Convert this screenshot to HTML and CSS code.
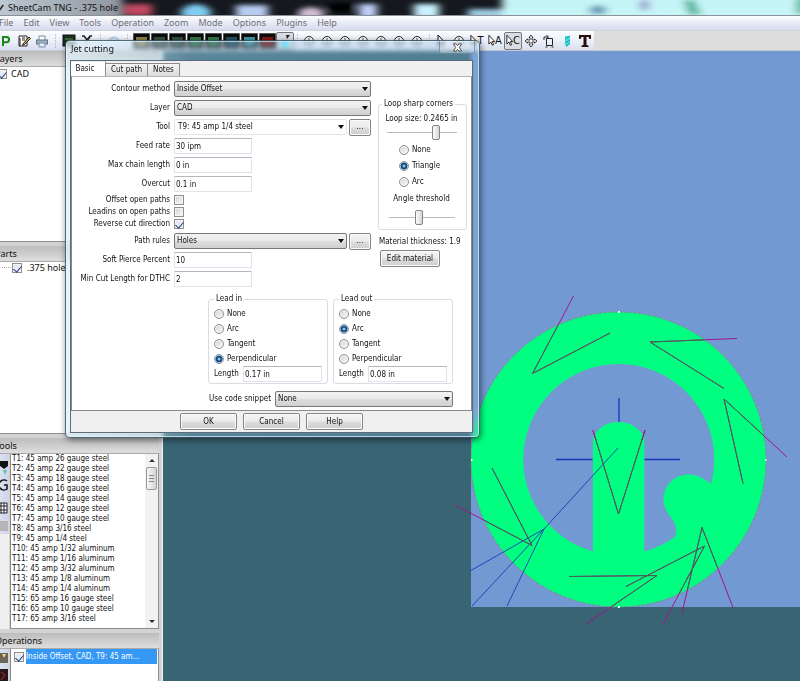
FILE: index.html
```
<!DOCTYPE html>
<html lang="en">
<head>
<meta charset="utf-8">
<title>SheetCam TNG - .375 hole</title>
<link rel="stylesheet" href="styles.css">
</head>
<body>
<svg class="defs" aria-hidden="true">
  <symbol id="post" viewBox="0 0 17 16"><rect width="17" height="16" rx="1" fill="#555"/><rect x="1" y="1" width="15" height="14" fill="#0b0d0c"/><path d="M3 4h11v9H3z" fill="currentColor" opacity=".75"/></symbol>
  <symbol id="eye" viewBox="0 0 14 14"><circle cx="7" cy="7" r="4.500" fill="#fff" stroke="#222"/><path d="M4 6.500h6M7 4v5" stroke="#555"/></symbol>
  <symbol id="cursor" viewBox="0 0 8 14"><path d="M1 1v10l2.300-2.200 1.700 3.700 1.500-.8-1.700-3.500h2.900z" fill="#fff" stroke="#111"/></symbol>
</svg>
<div class="app">
  <header class="title">
    <svg class="backdrop" viewBox="0 0 800 15" preserveAspectRatio="none" aria-hidden="true">
      <defs>
        <filter id="soft" x="-10%" y="-50%" width="120%" height="200%"><feGaussianBlur stdDeviation="4 2"/></filter>
        <linearGradient id="left"><stop offset="0" stop-color="#c2cfda"/><stop offset="1" stop-color="#8f979e"/></linearGradient>
      </defs>
      <rect width="800" height="15" fill="#15191f"/>
      <g filter="url(#soft)">
        <rect x="-20" y="-5" width="142" height="25" fill="url(#left)"/>
        <rect x="124" y="4" width="28" height="12" fill="#c04a60"/>
        <ellipse cx="196" cy="13" rx="15" ry="9" fill="#7fcdf2"/>
        <rect x="236" y="5" width="32" height="14" fill="#b7ccf2"/>
        <ellipse cx="311" cy="14" rx="13" ry="7" fill="#cfbdd4"/>
        <rect x="328" y="3" width="26" height="9" fill="#040506"/>
        <rect x="359" y="4" width="18" height="14" fill="#c2d1fa"/>
        <rect x="414" y="4" width="25" height="14" fill="#c9f2ff"/>
        <rect x="468" y="9" width="34" height="10" fill="#9dcbe2"/>
        <rect x="502" y="-6" width="320" height="30" fill="#c6f5f7"/>
        <ellipse cx="598" cy="10" rx="9" ry="5" fill="#6d9fba"/>
        <rect x="640" y="0" width="9" height="10" fill="#9a9dcf"/>
        <path d="M683 0h12l6 15h-12z" fill="#54b59c"/>
        <rect x="796" y="-2" width="10" height="16" fill="#54b59c"/>
      </g>
    </svg>
    <svg class="mark" viewBox="0 0 8 10" aria-hidden="true"><path d="M0 4l2 4 5-7" fill="none" stroke="#222" stroke-width="2"/></svg>
    <h1>SheetCam TNG - .375 hole</h1>
  </header>
  <nav class="menu">
    <a href="#">File</a><a href="#">Edit</a><a href="#">View</a><a href="#">Tools</a><a href="#">Operation</a><a href="#">Zoom</a><a href="#">Mode</a><a href="#">Options</a><a href="#">Plugins</a><a href="#">Help</a>
  </nav>
  <div class="toolbar">
    <div class="tools">
      <button aria-label="Post"><svg viewBox="0 0 14 14"><path d="M4 12V3h3.500a2.600 2.600 0 010 5.200H4" fill="none" stroke="#168a16" stroke-width="2"/></svg></button>
      <button aria-label="Edit job"><svg viewBox="0 0 14 14"><path d="M2 2h8v10H2z" fill="#fff" stroke="#222"/><path d="M3 12V4M5 4h3M5 6h3" stroke="#222"/><path d="M6 10l6-7 1.500 1.500-6 6-2 .7z" fill="#d6b24a" stroke="#222"/></svg></button>
      <button aria-label="Print"><svg viewBox="0 0 14 14"><path d="M4 6V2h6v4" fill="#fff" stroke="#7a8da0"/><rect x="1.500" y="6" width="11" height="4" fill="#9fb0c0" stroke="#5f7488"/><path d="M4 9h6v4H4z" fill="#dcecf8" stroke="#7a8da0"/></svg></button>
      <i class="sep"></i>
      <button aria-label="Machine"><svg viewBox="0 0 14 14"><rect x="1" y="1" width="12" height="11" fill="#18301c" stroke="#111"/><path d="M3 5h8" stroke="#5c9a62"/></svg></button>
      <button aria-label="Cut"><svg viewBox="0 0 14 14"><path d="M2 2h2l3 4 3-4h2M5 9l5-6" fill="none" stroke="#222" stroke-width="1.500"/></svg></button>
      <i class="sep"></i>
      <button aria-label="Undo"><svg viewBox="0 0 14 14"><path d="M2 6c4-4 8-2 10 1" fill="none" stroke="#bcd3e6" stroke-width="3"/></svg></button>
      <i class="sep"></i>
      <button class="op c1" aria-label="Outside offset"><svg><use href="#post"/></svg></button>
      <button class="op c2" aria-label="Inside offset"><svg><use href="#post"/></svg></button>
      <button class="op c2" aria-label="No offset"><svg><use href="#post"/></svg></button>
      <button class="op c3" aria-label="Pocket"><svg><use href="#post"/></svg></button>
      <button class="op c3" aria-label="Drill"><svg><use href="#post"/></svg></button>
      <button class="op c4" aria-label="Engrave"><svg><use href="#post"/></svg></button>
      <button class="op c5" aria-label="Thread"><svg><use href="#post"/></svg></button>
      <button class="op c6" aria-label="Spot"><svg><use href="#post"/></svg></button>
      <button class="on" aria-label="Jet cut"><svg viewBox="0 0 14 14"><path d="M8 1h4l-3 4z" fill="#222"/><circle cx="7" cy="10" r="4" fill="#59e2ff"/></svg></button>
      <i class="sep thin"></i>
      <button aria-label="View 1"><svg><use href="#eye"/></svg></button>
      <button aria-label="View 2"><svg><use href="#eye"/></svg></button>
      <button aria-label="View 3"><svg><use href="#eye"/></svg></button>
      <button aria-label="View 4"><svg><use href="#eye"/></svg></button>
      <button aria-label="View 5"><svg><use href="#eye"/></svg></button>
      <button aria-label="View 6"><svg><use href="#eye"/></svg></button>
      <button aria-label="View 7"><svg><use href="#eye"/></svg></button>
      <i class="sep thin"></i>
      <button aria-label="Select"><svg><use href="#cursor"/></svg></button>
      <button aria-label="Zoom"><svg><use href="#eye"/></svg></button>
      <button class="letter"><svg><use href="#cursor"/></svg>T</button>
      <button class="letter"><svg><use href="#cursor"/></svg>A</button>
      <button class="letter on"><svg><use href="#cursor"/></svg>C</button>
      <button aria-label="Move"><svg viewBox="0 0 14 14"><path d="M7 1l2 2.500H8V6h2.500V5L13 7l-2.500 2V8H8v2.500h1L7 13l-2-2.500h1V8H3.500v1L1 7l2.500-2v1H6V3.500H5z" fill="#fff" stroke="#222" stroke-width=".9"/></svg></button>
      <button aria-label="Rotate"><svg viewBox="0 0 14 14"><path d="M4.500 4.500h6v7h-6zM3.500 13h2M9.500 13h2M2 6V3h4M4.500 1L6.500 3l-2 2" fill="none" stroke="#222"/></svg></button>
      <button aria-label="Drilling"><svg viewBox="0 0 14 14"><path d="M5 2h5v8l-3 3-2-2z" fill="#3fe0e4"/><path d="M5 5l5-3M5 9l5-3M6 12l4-3" stroke="#1a97a2"/></svg></button>
      <button aria-label="Text"><svg viewBox="0 0 14 14"><path d="M1 1h12v4h-1.500l-1-2H8.500v8l2 .5V13h-7v-1.500l2-.5V3h-2l-1 2H1z" fill="#2b0d0d"/></svg></button>
    </div>
  </div>
  <main class="work">
    <aside class="side">
      <section>
        <h2>Layers</h2>
        <div class="pane layers"><label><input type="checkbox" checked>CAD</label></div>
      </section>
      <section>
        <h2>Parts</h2>
        <div class="pane parts"><i class="twig"></i><label><input type="checkbox" checked>.375 hole</label></div>
      </section>
      <section>
        <h2>Tools</h2>
        <div class="split">
          <div class="strip">
            <svg viewBox="0 0 15 80" aria-hidden="true"><path d="M6 7h8v5l-4 3-4-3z" fill="#111"/><path d="M9 16h4l-2 5z" fill="#5fc79b"/><path d="M13 27a5 5 0 10 0 8v-4h-3" fill="none" stroke="#111" stroke-width="1.500"/><path d="M4 49h9v10H4zM4 52h9M4 56h9M7 49v10M10 49v10" fill="#fff" stroke="#222"/><rect x="4" y="67" width="10" height="10" fill="#b5b5b5"/></svg>
          </div>
          <div class="pane listbox">
            <ul>
              <li>T1: 45 amp 26 gauge steel</li><li>T2: 45 amp 22 gauge steel</li><li>T3: 45 amp 18 gauge steel</li><li>T4: 45 amp 16 gauge steel</li><li>T5: 45 amp 14 gauge steel</li><li>T6: 45 amp 12 gauge steel</li><li>T7: 45 amp 10 gauge steel</li><li>T8: 45 amp 3/16 steel</li><li>T9: 45 amp 1/4 steel</li><li>T10: 45 amp 1/32 aluminum</li><li>T11: 45 amp 1/16 aluminum</li><li>T12: 45 amp 3/32 aluminum</li><li>T13: 45 amp 1/8 aluminum</li><li>T14: 45 amp 1/4 aluminum</li><li>T15: 65 amp 16 gauge steel</li><li>T16: 65 amp 10 gauge steel</li><li>T17: 65 amp 3/16 steel</li>
            </ul>
            <div class="scroll"><i class="up"></i><i class="thumb"></i><i class="down"></i></div>
          </div>
        </div>
      </section>
      <section>
        <h2>Operations</h2>
        <div class="split">
          <div class="strip">
            <svg viewBox="0 0 15 34" aria-hidden="true"><rect x="3" y="4" width="11" height="10" fill="#6d6457"/><path d="M8 5h4l-2 4z" fill="#f1d27a"/><rect x="3" y="20" width="11" height="13" fill="#2a1417"/><path d="M7 23l4 3-4 5" stroke="#a33" fill="none"/></svg>
          </div>
          <div class="pane ops"><label><input type="checkbox" checked><span>Inside Offset, CAD, T9: 45 am...</span></label></div>
        </div>
      </section>
    </aside>
    <svg class="canvas" viewBox="163 51 637 630" preserveAspectRatio="xMinYMin slice" role="img" aria-label="Part drawing">
      <defs>
        <clipPath id="disc"><circle cx="618.500" cy="459.500" r="147"/></clipPath>
        <g id="leads" fill="none">
          <path d="M573.500 296L532.500 373.500 610 333M737 338.500L650 342l74 46.500M787 457L724 399l19 84.500M593 430.500L618.500 514 645 430M455 505l77 40.500-40-77.500M569 576.500l88-1L586 624M626 586.500L704.500 546 663 624M682 613l20-85.500L733 607.500"/>
        </g>
      </defs>
      <rect x="471" y="51" width="1600" height="556" fill="#7399d3"/>
      <path fill="#00ff80" fill-rule="evenodd" d="M618.500 312a147.500 147.500 0 110 295 147.500 147.500 0 010-295zM618.800 364a95.500 95.500 0 100 191 95.500 95.500 0 000-191z"/>
      <path fill="#00ff80" d="M593 565V437Q602 422 618.500 422T644.300 437V565zM712 484C701 477 695 474 687 474.500 672 476 664 487 663.500 499 663.500 508 668 513 672 519 676.500 525 677 531 675 537L705 560 735 490z"/>
      <circle cx="618.500" cy="459.500" r="147.500" fill="none" stroke="#7f8a70" stroke-width=".8" stroke-dasharray="3 2"/>
      <path d="M556 459.500h36.500M644.500 459.500H680M619 398v24" stroke="#1735b8" stroke-width="1.300"/>
      <path d="M618 448L544 529 472 606M544 529l-74 42M544 529l-37 77" fill="none" stroke="#1d48b4"/>
      <use href="#leads" stroke="#a3158e"/>
      <use href="#leads" stroke="#3c6b50" clip-path="url(#disc)"/>
      <path d="M593 430.500l3 10M645 430l-3 10" stroke="#a3158e"/>
      <path d="M618 312h2M618 607h2M471 460h1.500M765 460h1.500" stroke="#d8ffe8" stroke-width="2"/>
    </svg>
  </main>

  <form class="dialog">
    <div class="caption">
      <h2>Jet cutting</h2>
      <button type="button" class="close" aria-label="Close"><svg viewBox="0 0 12 10"><path d="M1.500 1h3L6 3l1.500-2h3L8 5l2.500 4h-3L6 7 4.500 9h-3L4 5z" fill="#fff" stroke="#444"/></svg></button>
    </div>
    <div class="client">
      <div class="tabs" role="tablist">
        <button type="button" role="tab" class="active">Basic</button><button type="button" role="tab">Cut path</button><button type="button" role="tab">Notes</button>
      </div>
      <div class="page">
        <div class="columns">
          <div class="fields">
            <div class="row"><label for="contour">Contour method</label><span class="select"><select id="contour"><option>Inside Offset</option></select></span></div>
            <div class="row"><label for="layer">Layer</label><span class="select"><select id="layer"><option>CAD</option></select></span></div>
            <div class="row"><label for="tool">Tool</label><span class="select flat"><select id="tool"><option>T9: 45 amp 1/4 steel</option></select></span><button type="button" class="btn more">...</button></div>
            <div class="row"><label for="feed">Feed rate</label><input id="feed" type="text" value="30 ipm"></div>
            <div class="row"><label for="chain">Max chain length</label><input id="chain" type="text" value="0 in"></div>
            <div class="row"><label for="over">Overcut</label><input id="over" type="text" value="0.1 in"></div>
            <div class="checks">
              <div class="row"><label for="oop">Offset open paths</label><input id="oop" type="checkbox"></div>
              <div class="row"><label for="lop">Leadins on open paths</label><input id="lop" type="checkbox"></div>
              <div class="row"><label for="rcd">Reverse cut direction</label><input id="rcd" type="checkbox" checked></div>
            </div>
            <div class="row"><label for="rules">Path rules</label><span class="select"><select id="rules"><option>Holes</option></select></span><button type="button" class="btn more">...</button></div>
            <div class="row"><label for="pierce">Soft Pierce Percent</label><input id="pierce" type="text" value="10"></div>
            <div class="row"><label for="dthc">Min Cut Length for DTHC</label><input id="dthc" type="text" value="2"></div>
          </div>
          <div class="extra">
            <fieldset class="loop">
              <legend>Loop sharp corners</legend>
              <label for="size">Loop size: 0.2465 in</label>
              <input id="size" type="range" min="0" max="100" value="73">
              <div class="radios">
                <label><input type="radio" name="loop">None</label>
                <label><input type="radio" name="loop" checked>Triangle</label>
                <label><input type="radio" name="loop">Arc</label>
              </div>
              <label for="angle">Angle threshold</label>
              <input id="angle" type="range" min="0" max="100" value="45">
            </fieldset>
            <p>Material thickness: 1.9</p>
            <button type="button" class="btn">Edit material</button>
          </div>
        </div>
        <div class="leads">
          <fieldset>
            <legend>Lead in</legend>
            <label><input type="radio" name="in">None</label>
            <label><input type="radio" name="in">Arc</label>
            <label><input type="radio" name="in">Tangent</label>
            <label><input type="radio" name="in" checked>Perpendicular</label>
            <div class="length"><label for="inlen">Length</label><input id="inlen" type="text" value="0.17 in"></div>
          </fieldset>
          <fieldset>
            <legend>Lead out</legend>
            <label><input type="radio" name="out">None</label>
            <label><input type="radio" name="out" checked>Arc</label>
            <label><input type="radio" name="out">Tangent</label>
            <label><input type="radio" name="out">Perpendicular</label>
            <div class="length"><label for="outlen">Length</label><input id="outlen" type="text" value="0.08 in"></div>
          </fieldset>
        </div>
        <div class="snippet"><label for="code">Use code snippet</label><span class="select"><select id="code"><option>None</option></select></span></div>
      </div>
      <div class="actions">
        <button type="button" class="btn">OK</button><button type="button" class="btn">Cancel</button><button type="button" class="btn">Help</button>
      </div>
    </div>
  </form>
</div>
</body>
</html>
```
FILE: styles.css
```
* { box-sizing: border-box; }
body { margin: 0; overflow: hidden; font: 8px/10px "DejaVu Sans Condensed", "Noto Sans", sans-serif; color: #111; }
h1, h2, p, ul { margin: 0; padding: 0; font-weight: normal; }
ul { list-style: none; }
button, input, select { font: inherit; color: inherit; margin: 0; }
button { padding: 0; border: 0; background: none; }
svg { display: block; }
.defs { position: absolute; width: 0; height: 0; }

/* The window hangs slightly off the left edge of the screen. */
.app { position: relative; display: flex; flex-direction: column; height: 100vh; margin-left: -6px; }

.title { position: relative; display: flex; flex: none; align-items: center; gap: 4px; height: 15px; padding-left: 4px; }
.title h1 { position: relative; font: 9px/14px "Noto Sans", sans-serif; }
.backdrop { position: absolute; left: 6px; top: 0; width: calc(100% - 6px); height: 100%; }
.mark { position: relative; width: 6px; height: 8px; }

.menu { display: flex; flex: none; gap: 10px; height: 15px; padding-left: 5px; border-top: 1px solid #8b9196; background: linear-gradient(#fdfdff, #e8ebf6 50%, #d6dbec); font: 9px/14px "Noto Sans", sans-serif; }
.menu a { color: #6f7075; text-decoration: none; }

.toolbar { display: flex; flex: none; height: 21px; background: #dcdcdc; border-top: 1px solid #d0d2dc; border-bottom: 1px solid #c4c8d0; }
.tools { display: flex; align-items: center; padding-left: 3px; background: linear-gradient(#fbfcff, #eef1fa 45%, #d9dff0); }
.tools button { display: flex; align-items: center; justify-content: center; width: 18px; height: 18px; }
.tools svg { width: 14px; height: 14px; }
.tools .op svg { width: 17px; height: 16px; }
.tools .on { border: 1px solid #777; border-radius: 2px; background: #dadde4; }
.tools .letter { font-size: 11px; }
.tools .letter svg { width: 7px; height: 13px; }
.sep { width: 9px; height: 14px; background: radial-gradient(circle, #999 1px, transparent 1px) center / 3px 3px repeat-y; }
.thin { width: 6px; }
.c1 { color: #b9a35a; } .c2 { color: #41634a; } .c3 { color: #3f9a5a; } .c4 { color: #2a6578; } .c5 { color: #55c0d0; } .c6 { color: #b01818; }

.work { display: flex; flex: 1; min-height: 0; }
.side { display: grid; flex: none; grid-template-rows: minmax(0, 195fr) minmax(0, 192fr) minmax(0, 195fr) minmax(0, 48fr); width: 169px; padding-right: 3px; background: #d3d3d3; border-right: 1px solid #eef3f6; }
.side section { display: flex; flex-direction: column; min-height: 0; padding-bottom: 4px; }
.side section:last-child { padding-bottom: 0; }
.side h2 { flex: none; height: 16px; padding-left: 1px; font: 9px/15px "Noto Sans", sans-serif; background: linear-gradient(#bcbcbc, #dedede); border-bottom: 1px solid #aaa; }
.pane { flex: 1; min-width: 0; background: #fff; border: solid #8e8e8e; border-width: 0 1px 1px 0; }
.pane label { display: flex; align-items: center; gap: 4px; }
.layers { padding: 1px 0 0 3px; font: 9px/12px "Noto Sans", sans-serif; }
.parts { display: flex; align-items: flex-start; padding: 0 0 0 8px; font: 9px/12px "Noto Sans", sans-serif; }
.parts label { gap: 5px; margin-left: 1px; }
.twig { width: 9px; height: 6px; border-bottom: 1px dotted #aaa; }
.split { display: flex; flex: 1; min-height: 0; }
.strip { flex: none; width: 15px; background: #efefef; overflow: hidden; }
.strip svg { width: 15px; background: linear-gradient(90deg, #e3e8f4, #cdd5e8); }
.listbox { display: flex; justify-content: space-between; margin-left: 1px; border-left: 1px solid #888; padding-left: 1px; line-height: 10px; }
.scroll { display: flex; flex-direction: column; align-items: center; width: 13px; padding: 5px 0; background: #f2f2f2; }
.up, .down { border: solid transparent; border-width: 3px; }
.up { border-top: 0; border-bottom-color: #333; }
.down { border-bottom: 0; border-top-color: #333; margin-top: auto; }
.thumb { width: 11px; height: 23px; margin-top: 5px; border: 1px solid #999; border-radius: 2px; background: repeating-linear-gradient(#888 0 1px, transparent 1px 3px) center / 5px 7px no-repeat, linear-gradient(90deg, #f6f6f6, #d5d5d5); }
.ops { margin-left: 1px; border-left: 1px solid #888; border-bottom: 0; padding: 0 1px 0 3px; }
.ops label { gap: 2px; }
.ops span { flex: 1; line-height: 15px; color: #fff; background: #3598f5; white-space: nowrap; }
.canvas { flex: 1; min-width: 0; height: auto; background: #386474; }

input[type=checkbox], input[type=radio] { appearance: none; flex: none; width: 10px; height: 10px; border: 1px solid #8e8f8f; background: linear-gradient(135deg, #cfd3d8, #fafafa); box-shadow: inset 0 0 0 1px #f4f4f4; }
input[type=checkbox]:checked { display: grid; place-items: center; background: #e6ebf6; }
input[type=checkbox]:checked::after { content: ""; width: 4px; height: 7px; margin-bottom: 2px; border: solid #2b3f86; border-width: 0 1px 1px 0; transform: rotate(40deg); }
input[type=radio] { border-radius: 50%; }
input[type=radio]:checked { border-color: #8298ab; background: radial-gradient(circle, #7fc4e8 0 1px, #12406e 2px, #1d4f7e 3px, #e6f0f8 4px); box-shadow: none; }
input[type=text] { min-width: 0; height: 16px; padding: 0 1px; border: 1px solid #e2e3ea; border-top-color: #b4b7bf; background: #fff; outline: 0; }
input[type=range] { appearance: none; height: 16px; width: 70px; margin: 0; background: linear-gradient(#bbb, #bbb) center / 100% 1px no-repeat; }
input[type=range]::-webkit-slider-thumb { appearance: none; width: 8px; height: 15px; border: 1px solid #858585; border-radius: 2px; background: linear-gradient(90deg, #fbfbfb, #d6d6d6); }
.btn { height: 17px; border: 1px solid #858585; border-radius: 2px; background: linear-gradient(#f4f4f4, #ebebeb 48%, #dcdcdc 52%, #cfcfcf); box-shadow: inset 0 0 0 1px #fafafa; }
.select { position: relative; display: flex; flex: 1; height: 16px; }
.select::after { content: ""; position: absolute; right: 3px; top: 6px; border: 3px solid transparent; border-top: 4px solid #111; border-bottom: 0; pointer-events: none; }
.select select { appearance: none; width: 100%; padding: 0 10px 0 2px; border: 1px solid #777; border-radius: 2px; background: linear-gradient(#f2f2f2, #eaeaea 48%, #dddddd 52%, #d0d0d0); }
.select.flat select { padding-left: 3px; border-color: #e4e4ea; background: #fff; }

.dialog { position: absolute; left: 71px; top: 40px; width: 415px; padding: 0 7px 5px 5px; border: 1px solid rgba(40, 60, 75, .75); border-radius: 5px; background: linear-gradient(90deg, rgba(225, 240, 250, .75), rgba(170, 215, 245, .3) 30%, rgba(150, 200, 240, .25)); backdrop-filter: blur(2px); box-shadow: inset 0 0 0 1px rgba(225, 250, 255, .65), 1px 2px 6px rgba(0, 0, 0, .5); }
.caption { display: flex; justify-content: space-between; height: 20px; margin-right: -3px; }
.caption h2 { font: 9px/16px "Noto Sans", sans-serif; }
.close { display: grid; place-items: center; width: 36px; height: 13px; border: 1px solid rgba(90, 110, 130, .6); border-top: 0; border-radius: 0 0 3px 3px; background: rgba(255, 255, 255, .25); }
.close svg { width: 11px; height: 9px; }
.client { background: #f0f0f0; outline: 1px solid #5c6c78; }
.tabs { display: flex; align-items: flex-end; height: 15px; }
.tabs button { height: 13px; padding: 0 5px; border: 1px solid #8b8b8b; border-width: 1px 1px 0 0; background: linear-gradient(#f4f4f4, #dcdcdc); }
.tabs .active { width: 35px; height: 15px; padding: 0 6px 0 0; background: #fff; border-top-color: #eee; }
.page { background: #fff; border: 1px solid #8b8b8b; border-top-color: #b5b5b5; padding: 4px 18px 3px 0; }
.columns { display: flex; gap: 7px; margin-right: -14px; }
.fields { flex: 1; }
.row { display: flex; gap: 4px; align-items: center; margin-bottom: 3px; height: 16px; }
.row > label { width: 98px; text-align: right; white-space: nowrap; }
.row > input[type=text] { width: 78px; }
.more { width: 22px; margin-left: -2px; }
.checks { margin: -1px 0 3px; }
.checks .row { height: 12px; margin: 0; }
fieldset { min-width: 0; margin: 0; border: 1px solid #d9dce2; border-radius: 3px; padding: 0; }
legend { padding: 0 2px; }
.extra { width: 89px; padding-top: 18px; }
.loop { display: flex; flex-direction: column; align-items: center; padding: 5px 2px 4px 0; white-space: nowrap; }
.loop legend { margin-left: 3px; }
.loop > label { display: block; }
.radios { margin: 2px 4px 4px 0; }
.radios label { display: flex; align-items: center; gap: 3px; height: 16px; }
.loop #angle { width: 66px; margin-top: 5px; }
.extra p { margin: 7px 0 3px 1px; white-space: nowrap; }
.extra .btn { width: 60px; margin-left: 2px; }
.leads { display: flex; justify-content: flex-end; gap: 5px; margin-top: 4px; }
.leads fieldset { width: 120px; padding: 2px 5px 1px; }
.leads > fieldset > label { display: flex; align-items: center; gap: 3px; height: 15px; }
.length { display: flex; align-items: center; justify-content: space-between; }
.length input { width: 79px; }
.snippet { display: flex; justify-content: flex-end; align-items: center; gap: 4px; margin-top: 7px; }
.snippet .select { flex: 0 0 178px; }
.actions { display: flex; justify-content: center; gap: 6px; padding: 2px 0; }
.actions .btn { width: 57px; }
```
